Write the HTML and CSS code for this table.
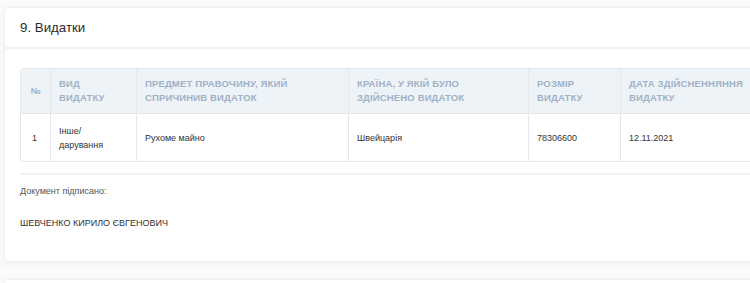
FILE: index.html
```html
<!DOCTYPE html>
<html lang="uk">
<head>
<meta charset="utf-8">
<title>Видатки</title>
<link rel="stylesheet" href="styles.css">
</head>
<body>
<div class="page">
  <section class="card">
    <header class="card-head">
      <h2 class="card-title">9. Видатки</h2>
    </header>
    <div class="card-body">
      <table class="data">
        <colgroup>
          <col class="c-num"><col class="c-kind"><col class="c-subj"><col class="c-country"><col class="c-size"><col class="c-date">
        </colgroup>
        <thead>
          <tr>
            <th class="num">№</th>
            <th>Вид<br>видатку</th>
            <th>Предмет правочину, який<br>спричинив видаток</th>
            <th>Країна, у якій було<br>здійснено видаток</th>
            <th>Розмір<br>видатку</th>
            <th>Дата здійсненняння<br>видатку</th>
          </tr>
        </thead>
        <tbody>
          <tr>
            <td class="num">1</td>
            <td>Інше/<br>дарування</td>
            <td>Рухоме майно</td>
            <td>Швейцарія</td>
            <td>78306600</td>
            <td>12.11.2021</td>
          </tr>
        </tbody>
      </table>
      <div class="sign">
        <p class="sign-label">Документ підписано:</p>
        <p class="sign-name">ШЕВЧЕНКО КИРИЛО ЄВГЕНОВИЧ</p>
      </div>
    </div>
  </section>
  <section class="card card-next"></section>
</div>
</body>
</html>
```

FILE: styles.css
```css
html, body {
  margin: 0;
  padding: 0;
  overflow: hidden;
  background: #fbfbfc;
}
body {
  font-family: "Liberation Sans", Arial, sans-serif;
  color: #333;
}
.page {
  padding: 7px 0 0 4px;
  width: 1000px;
}
.card {
  background: #fff;
  border: 1px solid #eef0f3;
  border-radius: 4px;
  box-shadow: 0 2px 8px rgba(30, 40, 60, 0.05);
}
.card-head {
  height: 39px;
  display: flex;
  align-items: center;
  padding: 0 15px;
  border-bottom: 2px solid #f1f2f4;
}
.card-title {
  margin: 0;
  font-size: 13.3px;
  font-weight: normal;
  color: #2b2b2b;
}
.card-body {
  padding: 19px 15px 31px;
}
.data {
  border-collapse: separate;
  border-spacing: 0;
  border: 1px solid #e4e8ed;
  border-radius: 3px;
  table-layout: fixed;
  width: 900px;
  font-size: 9px;
}
.c-num { width: 29px; }
.c-kind { width: 86px; }
.c-subj { width: 212px; }
.c-country { width: 180px; }
.c-size { width: 92px; }
.c-date { width: 301px; }
.data th, .data td {
  text-align: left;
  vertical-align: middle;
  padding: 0 8px;
  line-height: 14px;
  border-left: 1px solid #e4e8ed;
}
.data th:first-child, .data td:first-child {
  border-left: 0;
}
.data th {
  background: #eef3f8;
  height: 44px;
  color: #a0b1c6;
  font-size: 9.5px;
  font-weight: bold;
  text-transform: uppercase;
  letter-spacing: 0.15px;
  border-bottom: 1px solid #e4e8ed;
}
.data th.num {
  text-align: center;
  padding: 0;
  letter-spacing: 0;
  font-size: 9px;
}
.data td {
  height: 47px;
  color: #333;
  font-size: 9px;
}
.data td.num {
  padding-left: 11px;
}
.sign {
  margin-top: 11px;
  border-top: 2px solid #f1f2f4;
  padding-top: 9px;
}
.sign p {
  margin: 0;
  font-size: 9px;
  line-height: 14px;
}
.sign-label {
  color: #555;
}
.sign-name {
  margin-top: 18px !important;
  color: #333;
}
.card-next {
  margin-top: 17px;
  height: 40px;
}
```
